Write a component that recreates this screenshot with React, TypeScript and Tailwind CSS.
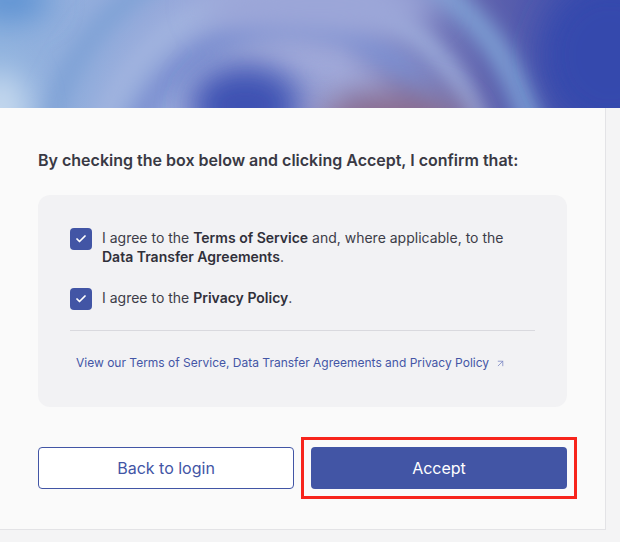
import { ArrowUpRight, Check } from "lucide-react";

function HeaderArt() {
  // blurred bands and blobs imitating the abstract gradient banner
  return (
    <svg viewBox="0 0 620 108" preserveAspectRatio="none" className="h-full w-full">
      <defs>
        <linearGradient id="base" x1="0" y1="0" x2="1" y2="0">
          <stop offset="0" stopColor="#8fb2de" />
          <stop offset="0.3" stopColor="#97a8da" />
          <stop offset="0.55" stopColor="#9aa2d4" />
          <stop offset="0.78" stopColor="#5f62ad" />
          <stop offset="1" stopColor="#3649ad" />
        </linearGradient>
        <filter id="blur" x="-50%" y="-50%" width="200%" height="200%">
          <feGaussianBlur stdDeviation="16" />
        </filter>
        <filter id="blurS" x="-50%" y="-50%" width="200%" height="200%">
          <feGaussianBlur stdDeviation="10" />
        </filter>
      </defs>
      <rect width="620" height="108" fill="url(#base)" />
      <g filter="url(#blurS)" fill="none">
        <circle cx="290" cy="190" r="250" stroke="#7fa2d6" strokeWidth="22" />
        <circle cx="290" cy="190" r="200" stroke="#a4b6e0" strokeWidth="16" />
        <circle cx="290" cy="190" r="165" stroke="#7a8ed0" strokeWidth="20" />
        <circle cx="290" cy="190" r="128" stroke="#a3acdc" strokeWidth="14" />
      </g>
      <g filter="url(#blur)">
        <ellipse cx="0" cy="110" rx="30" ry="40" fill="#c4d8ee" />
        <ellipse cx="10" cy="0" rx="40" ry="20" fill="#5a90d2" />
        <ellipse cx="245" cy="105" rx="55" ry="40" fill="#3e51b2" />
        <ellipse cx="395" cy="125" rx="75" ry="35" fill="#8a6c8e" />
        <ellipse cx="610" cy="55" rx="70" ry="75" fill="#3448ad" />
        <ellipse cx="320" cy="5" rx="120" ry="30" fill="#9ba6d8" />
      </g>
    </svg>
  );
}

function Box() {
  return (
    <span className="mt-[1px] flex h-[22px] w-[22px] shrink-0 items-center justify-center rounded-[4px] bg-[#4255a5]">
      <Check size={12} strokeWidth={3.5} className="text-white" />
    </span>
  );
}

export default function App() {
  return (
    <div
      className="h-[542px] w-[620px] overflow-hidden bg-[#f4f4f5] text-[#3d3d48]"
      style={{ fontFamily: "Inter, 'Noto Sans', sans-serif" }}
    >
      <div className="h-[108px] w-full overflow-hidden">
        <HeaderArt />
      </div>

      <div className="w-[606px] border-r border-b border-[#e3e3e6] bg-[#fafafa] px-[38px] pt-[42px] pb-[40px]">
        <p className="text-[16px] leading-[20px] font-semibold text-[#393944]">
          By checking the box below and clicking Accept, I confirm that:
        </p>

        <div className="mt-[25px] rounded-[12px] bg-[#f2f2f4] px-[32px] pt-[32px] pb-[36px]">
          <label className="flex gap-[10px] text-[14px] leading-[19px]">
            <Box />
            <span className="pt-[1px]">
              I agree to the <b className="font-semibold text-[#30303a]">Terms of Service</b> and, where
              applicable, to the <b className="font-semibold text-[#30303a]">Data Transfer Agreements</b>.
            </span>
          </label>

          <label className="mt-[21px] flex gap-[10px] text-[14px] leading-[19px]">
            <Box />
            <span className="pt-[1px]">
              I agree to the <b className="font-semibold text-[#30303a]">Privacy Policy</b>.
            </span>
          </label>

          <div className="mt-[20px] h-px bg-[#d9d9de]" />

          <a className="mt-[24px] flex items-center gap-[6px] pl-[6px] text-[12px] leading-[16px] text-[#4456a6]">
            View our Terms of Service, Data Transfer Agreements and Privacy Policy
            <ArrowUpRight size={11} strokeWidth={1.75} className="text-[#7d88c4]" />
          </a>
        </div>

        <div className="mt-[40px] grid grid-cols-2 gap-[17px]">
          <button className="h-[42px] rounded-[4px] border border-[#4255a5] bg-white text-[16px] text-[#4255a5]">
            Back to login
          </button>
          <div className="relative">
            <button className="h-[42px] w-full rounded-[4px] bg-[#4255a5] text-[16px] text-white">
              Accept
            </button>
            <div className="pointer-events-none absolute -inset-[10px] border-[3px] border-[#f7241c]" />
          </div>
        </div>
      </div>
    </div>
  );
}
